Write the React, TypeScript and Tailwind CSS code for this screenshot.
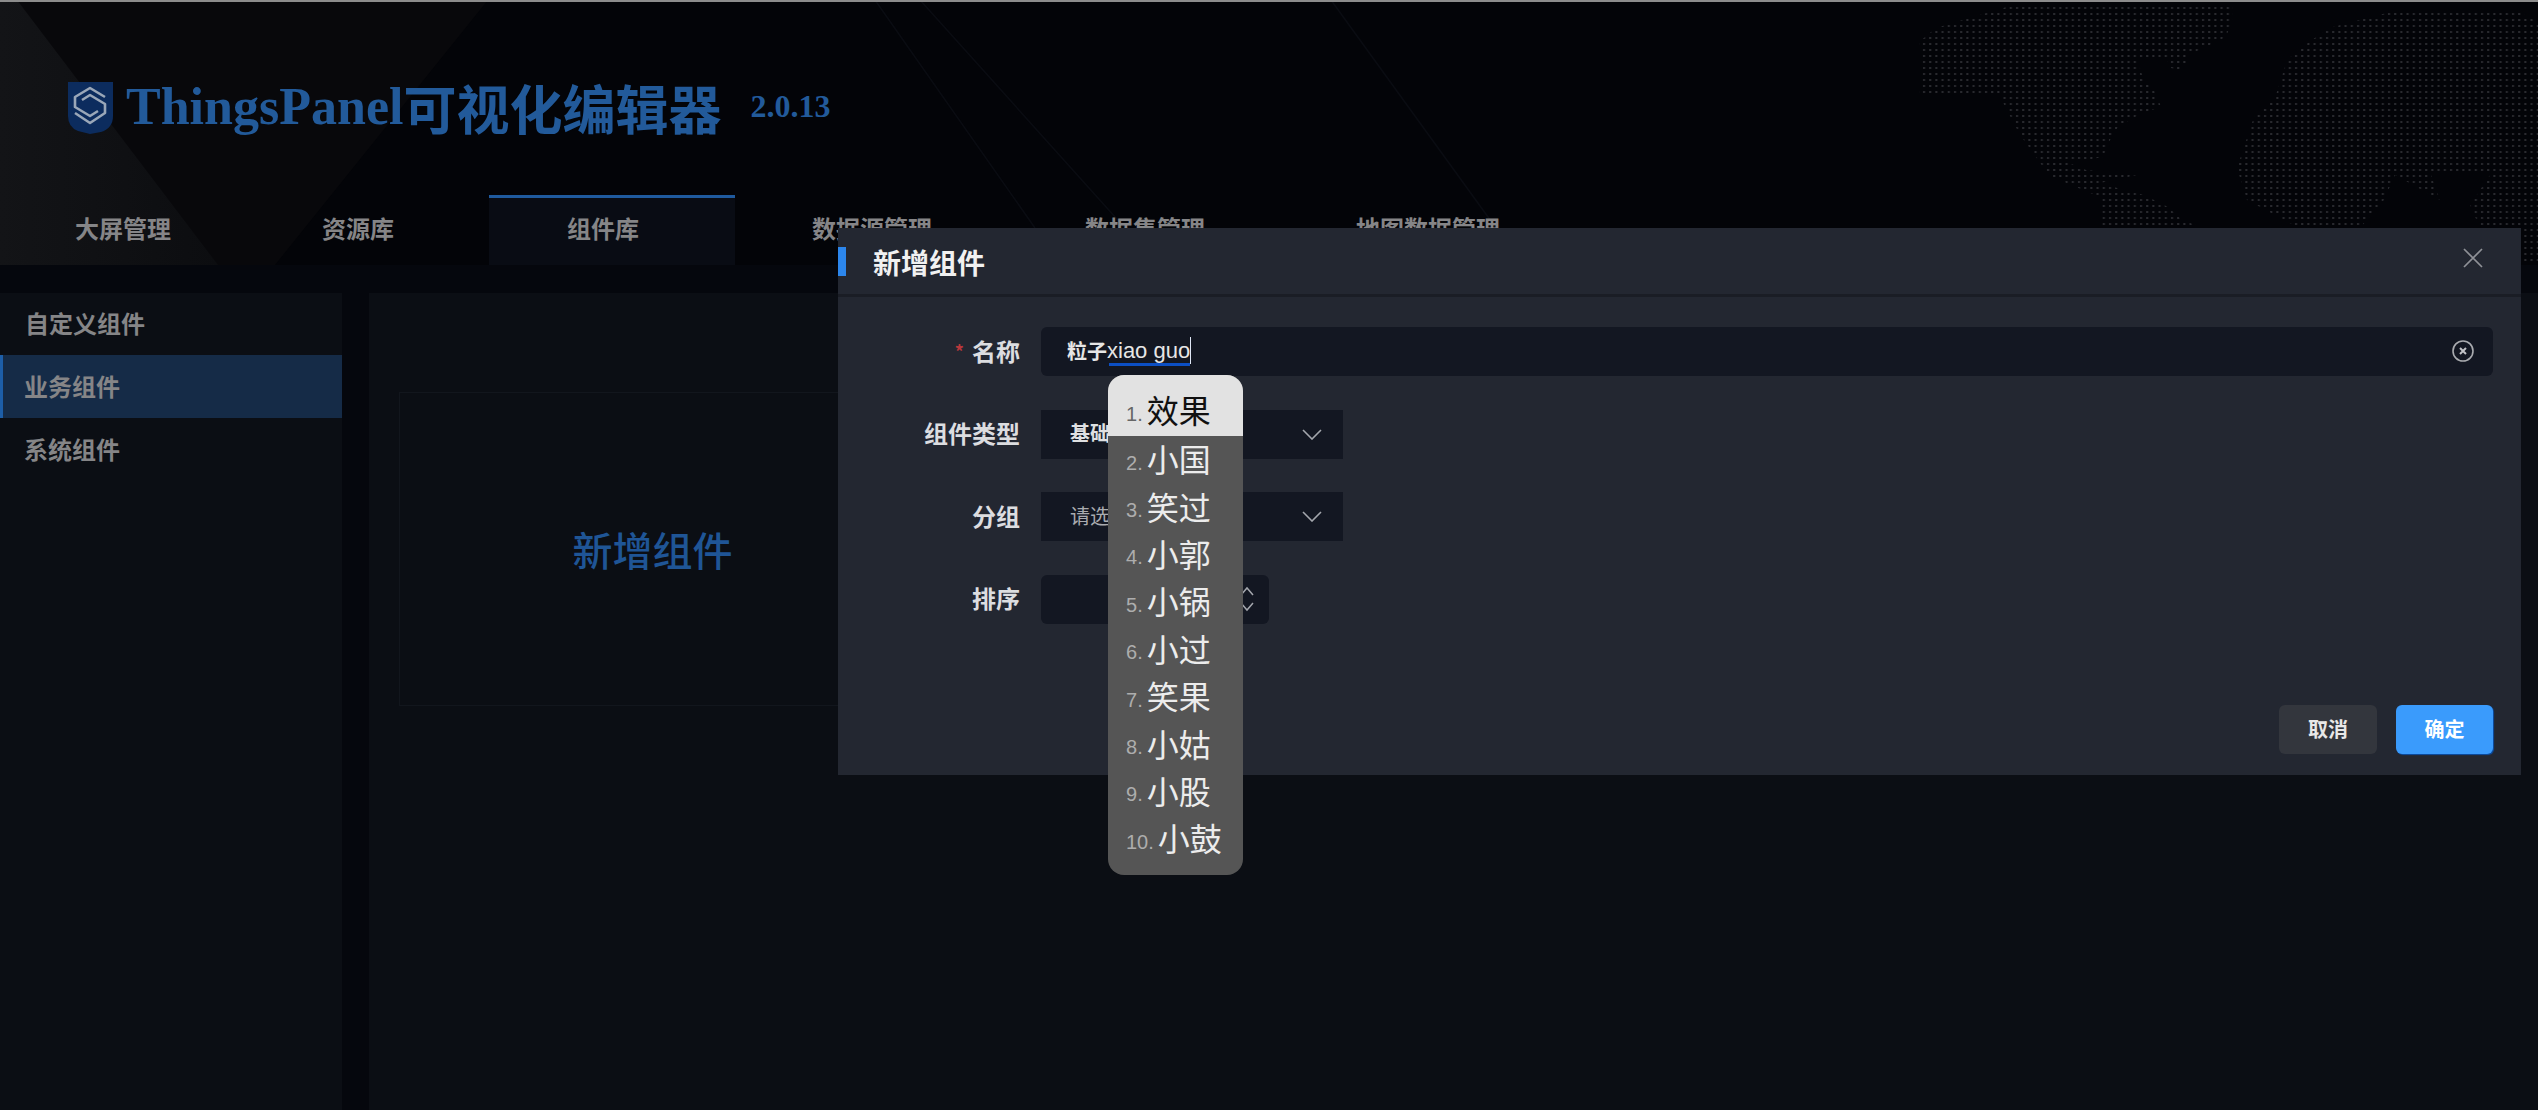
import React from "react";

const sans = "font-['Noto_Sans_CJK_SC','Liberation_Sans',sans-serif]";

const tabs = [
  { label: "大屏管理", cls: "w-[247px] pl-[75px]" },
  { label: "资源库", cls: "w-[242px] pl-[75px]" },
  { label: "组件库", cls: "w-[246px] pl-[78px] bg-[#090c14] border-t-[3px] border-[#1f5a9e]", active: true },
  { label: "数据源管理", cls: "w-[273px] pl-[77px]" },
  { label: "数据集管理", cls: "w-[271px] pl-[77px]" },
  { label: "地图数据管理", cls: "w-[300px] pl-[77px]" },
];

const candidates = ["效果", "小国", "笑过", "小郭", "小锅", "小过", "笑果", "小姑", "小股", "小鼓"];

function Backdrop() {
  return (
    <svg className="absolute inset-0" width="2538" height="265" viewBox="0 0 2538 265">
      <defs>
        <pattern id="dots" width="6.2" height="6" patternUnits="userSpaceOnUse">
          <rect x="1" y="1" width="2" height="2" fill="#2a2b30" />
        </pattern>
        <linearGradient id="fade" x1="0" y1="0" x2="1" y2="0">
          <stop offset="0" stopColor="#131417" />
          <stop offset="1" stopColor="#0c0d10" />
        </linearGradient>
      </defs>
      <polygon points="0,0 488,0 275,265 0,265" fill="#08080b" />
      <polygon points="17,0 218,265 0,265 0,0" fill="url(#fade)" />
      <g stroke="#0a0c12" strokeWidth="1.5" fill="none">
        <path d="M875 0 L1035 228" />
        <path d="M920 0 L1125 228" />
        <path d="M1331 0 L1496 228" />
      </g>
      <polygon
        fill="url(#dots)"
        points="2020,3 2233,3 2233,18 2226,37 2189,55 2187,63 2180,70 2171,68 2165,57 2137,60 2144,80 2156,93 2161,107 2142,113 2118,127 2110,140 2103,157 2069,163 2086,170 2137,175 2100,183 2124,190 2144,195 2168,207 2182,220 2201,227 2100,227 2100,197 2052,177 2040,163 2019,133 1998,93 1919,95 1923,67 1919,42 1936,28"
      />
      <polygon
        fill="url(#dots)"
        points="2302,47 2329,28 2398,10 2515,10 2538,22 2538,262 2522,262 2522,228 2480,228 2470,205 2490,175 2430,172 2440,200 2395,175 2384,200 2360,228 2299,228 2247,200 2237,168 2254,117 2275,98 2287,60"
      />
    </svg>
  );
}

function Logo() {
  return (
    <svg width="45" height="52" viewBox="0 0 45 52" className="shrink-0">
      <path d="M0 0 H45 V34 Q45 46 33 50 L22 52 L10 49 Q0 45 0 34 Z" fill="#0c2c5e" />
      <g fill="none" stroke="#9aa7b8" strokeWidth="2.6" strokeLinejoin="round">
        <path d="M37 15 L22 6 L7 15 L7 25 L22 34 L30 29" />
        <path d="M7 31 L22 41 L37 31 L37 22 L22 13 L14 18" />
      </g>
    </svg>
  );
}

function Chevron() {
  return (
    <svg width="20" height="11" viewBox="0 0 20 11" className="absolute right-[21px] top-[19px]">
      <path d="M1 1 L10 10 L19 1" fill="none" stroke="#a4a7ad" strokeWidth="1.6" />
    </svg>
  );
}

function Label({ text, required }: { text: string; required?: boolean }) {
  return (
    <div className="flex h-[49px] w-[182px] shrink-0 items-center justify-end gap-[8px] text-[24px] font-bold text-[#dcdde0]">
      {required && <span className="mt-[-2px] text-[18px] leading-none text-[#b8383c]">*</span>}
      <span className="mt-[-2px]">{text}</span>
    </div>
  );
}

export default function App() {
  return (
    <div className={`relative flex h-[1110px] w-[2538px] flex-col overflow-hidden bg-[#05070d] ${sans}`}>
      <header className="relative h-[265px] shrink-0 bg-[#030408]">
        <Backdrop />
        <div className="absolute inset-x-0 top-0 h-[2px] bg-[#8c8c8c]" />
        <div className="relative flex h-[195px] items-start pl-[68px] pt-[82px]">
          <Logo />
          <h1 className="ml-[13px] mt-[-3px] flex h-[56px] items-center text-[52px] leading-[56px] font-bold text-[#225a9a]">
            <span className="font-['Liberation_Serif',serif]">ThingsPanel</span>
            <span className="text-[53px]">可视化编辑器</span>
          </h1>
          <span className="ml-[29px] mt-[6px] font-['Liberation_Serif',serif] text-[32px] leading-[36px] font-bold text-[#225a9a]">
            2.0.13
          </span>
        </div>
        <nav className="relative flex h-[70px]">
          {tabs.map((t) => (
            <div
              key={t.label}
              className={`flex h-[70px] shrink-0 items-center whitespace-nowrap text-[24px] font-bold text-[#858587] ${t.cls} ${t.active ? "pb-[7px]" : "pb-[4px]"}`}
            >
              {t.label}
            </div>
          ))}
        </nav>
      </header>

      <main className="mt-[28px] flex min-h-0 flex-1 gap-[27px]">
        <aside className="w-[342px] shrink-0 bg-[#0b0e14] text-[24px] font-bold text-[#858587]">
          <div className="flex h-[62px] items-center pb-[2px] pl-[25px]">自定义组件</div>
          <div className="flex h-[63px] items-center border-l-[3px] border-[#1d5ea8] bg-[#152b47] pb-[2px] pl-[21px]">业务组件</div>
          <div className="flex h-[63px] items-center pb-[2px] pl-[24px]">系统组件</div>
        </aside>
        <section className="flex-1 bg-[#0b0e14] pl-[30px] pt-[99px]">
          <div className="flex h-[314px] w-[507px] items-center justify-center border border-[#12161d] pb-[1px] text-[40px] font-medium text-[#1f5596]">
            新增组件
          </div>
        </section>
      </main>

      {/* dialog */}
      <div className="absolute left-[838px] top-[228px] flex h-[547px] w-[1683px] flex-col bg-[#232731]">
        <div className="flex h-[69px] shrink-0 items-center justify-between border-b-[3px] border-[#1a1d25]">
          <div className="flex items-center">
            <span className="h-[29px] w-[8px] bg-[#2c86ec]" />
            <h2 className="ml-[27px] mt-[2px] text-[28px] font-bold text-[#f1f1f1]">新增组件</h2>
          </div>
          <svg width="20" height="20" viewBox="0 0 20 20" className="mr-[38px] mt-[-6px]">
            <path d="M1 1 L19 19 M19 1 L1 19" stroke="#8f9197" strokeWidth="1.7" />
          </svg>
        </div>
        <form className="flex flex-col gap-[33.5px] pr-[28px] pt-[30px]">
          <div className="flex h-[49px]">
            <Label text="名称" required />
            <div className="relative ml-[21px] flex h-[49px] flex-1 items-center rounded-[6px] bg-[#131722] pl-[26px] text-[20px] text-[#e6e6e6]">
              <span className="mt-[-2px] font-bold">粒子</span>
              <span className="relative mt-[-2px] font-['Liberation_Sans',sans-serif] text-[22px] leading-[28px]">
                xiao guo
                <span className="absolute bottom-[-1px] left-[2px] right-0 h-[3px] bg-[#0c4fc4]" />
                <span className="absolute right-[-1px] top-0 h-[27px] w-[1.5px] bg-[#dfe6f5]" />
              </span>
              <svg width="24" height="24" viewBox="0 0 24 24" className="absolute right-[18px] top-[12px]">
                <circle cx="12" cy="12" r="10" fill="none" stroke="#a9abaf" strokeWidth="1.6" />
                <path d="M9 9 L15 15 M15 9 L9 15" stroke="#c2c3c7" strokeWidth="2" />
              </svg>
            </div>
          </div>
          <div className="flex h-[49px]">
            <Label text="组件类型" />
            <div className="relative ml-[21px] flex h-[49px] w-[302px] items-center bg-[#131722] pb-[2px] pl-[29px] text-[20px] font-bold text-[#dfe0e2]">
              基础组件
              <Chevron />
            </div>
          </div>
          <div className="flex h-[49px]">
            <Label text="分组" />
            <div className="relative ml-[21px] flex h-[49px] w-[302px] items-center bg-[#131722] pb-[2px] pl-[29px] text-[20px] text-[#a9abaf]">
              请选择分组
              <Chevron />
            </div>
          </div>
          <div className="flex h-[49px]">
            <Label text="排序" />
            <div className="relative ml-[21px] h-[49px] w-[228px] rounded-[6px] bg-[#131722]">
              <svg width="14" height="26" viewBox="0 0 14 26" className="absolute right-[15px] top-[11px]">
                <path d="M1 9 L7 2 L13 9 M1 17 L7 24 L13 17" fill="none" stroke="#a4a7ad" strokeWidth="1.5" />
              </svg>
            </div>
          </div>
        </form>
        <div className="mt-auto flex justify-end gap-[19px] pb-[21px] pr-[28px]">
          <button className="h-[49px] w-[98px] rounded-[6px] bg-[#33363d] pb-[2px] text-[20px] font-bold text-[#e8e8e8]">取消</button>
          <button className="h-[49px] w-[97px] rounded-[6px] bg-[#3a9bfc] pb-[2px] text-[20px] font-bold text-white shadow-[1px_1px_1px_#0a4fa8]">确定</button>
        </div>
      </div>

      {/* IME candidate window */}
      <div className="absolute left-[1108px] top-[375px] w-[135px] overflow-hidden rounded-[16px] bg-[#555555] pb-[12px]">
        {candidates.map((c, i) => (
          <div
            key={c}
            className={`flex items-center gap-[4px] pl-[18px] text-[32px] leading-none ${
              i === 0 ? "h-[61px] bg-[#e2e2e2] pt-[10px] text-[#111111]" : "h-[47.4px] text-[#ececec]"
            }`}
          >
            <span className={`font-['Liberation_Sans',sans-serif] text-[20px] ${i === 0 ? "text-[#666666]" : "text-[#adadad]"} pt-[6px]`}>
              {i + 1}.
            </span>
            <span className="mt-[-3px]">{c}</span>
          </div>
        ))}
      </div>
    </div>
  );
}
